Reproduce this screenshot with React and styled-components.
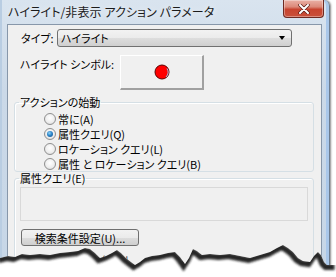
import React from 'react';
import styled, { createGlobalStyle } from 'styled-components';

const GlobalStyle = createGlobalStyle`
  html, body {
    margin: 0;
    padding: 0;
    background: #ffffff;
  }
  body {
    font-family: "Noto Sans CJK JP", "Noto Sans", sans-serif;
    font-feature-settings: "palt";
  }
`;

const Page = styled.div`
  position: relative;
  width: 336px;
  height: 277px;
  overflow: hidden;
  background: #ffffff;
`;

const Window = styled.div`
  width: 330px;
  height: 300px;
  box-sizing: border-box;
  padding: 0 7px 0 7px;
  background: linear-gradient(180deg, #d9e4ef 0%, #cbd9e8 30%, #c6d6e7 100%);
  border-right: 1px solid #6d7c8e;
  border-top-right-radius: 6px;
  box-shadow: 1px 0 2px rgba(0, 0, 0, 0.45), inset -3px 0 0 #a9c7ea, inset 2px 0 0 #b9cde2;
  display: flex;
  flex-direction: column;
`;

const TitleBar = styled.div`
  height: 24px;
  margin: 0 -2px 0 -7px;
  padding-left: 8px;
  display: flex;
  align-items: flex-start;
`;

const Title = styled.div`
  padding-top: 4px;
  font-size: 12px;
  line-height: 15px;
  color: #1b1b1b;
  text-shadow: 0 0 6px rgba(255, 255, 255, 0.9);
  letter-spacing: 0.1px;
`;

const CloseButton = styled.div`
  margin-left: auto;
  width: 41px;
  height: 18px;
  box-sizing: border-box;
  border: 1px solid #6e2a22;
  border-top: none;
  border-radius: 0 0 4px 4px;
  background: linear-gradient(180deg, #eab1a5 0%, #dc8a7a 40%, #c8442f 55%, #c9503a 100%);
  box-shadow: inset 0 0 0 1px rgba(255, 255, 255, 0.35);
  display: flex;
  align-items: center;
  justify-content: center;
`;

const Client = styled.div`
  flex: 1;
  background: #f0f0f0;
  border: 1px solid #8797aa;
  border-bottom: none;
  padding-top: 4px;
  font-size: 11px;
  color: #000;
`;

const TypeRow = styled.div`
  display: flex;
  align-items: center;
  height: 18px;
  padding-left: 13px;
`;

const TypeLabel = styled.span`
  width: 36px;
  line-height: 14px;
`;

const Combo = styled.div`
  width: 235px;
  height: 18px;
  box-sizing: border-box;
  border: 1px solid #707070;
  border-radius: 3px;
  background: linear-gradient(180deg, #f2f2f2 0%, #ebebeb 50%, #dddddd 51%, #cfcfcf 100%);
  display: flex;
  align-items: center;
  padding: 0 6px 0 3px;
  line-height: 14px;
`;

const ComboText = styled.span`
  flex: 1;
`;

const Arrow = styled.span`
  width: 0;
  height: 0;
  border-left: 3.5px solid transparent;
  border-right: 3.5px solid transparent;
  border-top: 4px solid #000;
`;

const SymbolRow = styled.div`
  display: flex;
  align-items: flex-start;
  margin-top: 8px;
  padding-left: 12px;
`;

const SymbolLabel = styled.span`
  width: 100px;
  padding-top: 2px;
  line-height: 14px;
`;

const SymbolButton = styled.div`
  width: 84px;
  height: 35px;
  box-sizing: border-box;
  background: #f0f0f0;
  border-top: 1px solid #ffffff;
  border-left: 1px solid #ffffff;
  border-right: 2px solid #a0a0a0;
  border-bottom: 2px solid #a0a0a0;
  display: flex;
  align-items: center;
  justify-content: center;
`;

const Group = styled.fieldset`
  margin: ${p => p.$top}px 7px 0 6px;
  padding: 0 0 ${p => p.$bottom}px 0;
  border: 1px solid #d5dfe5;
  border-radius: 3px;
  box-shadow: inset 1px 1px 0 #ffffff;
  min-width: 0;
`;

const Legend = styled.legend`
  margin-left: 4px;
  padding: 0 1px;
  line-height: 14px;
  font-size: 11px;
`;

const RadioList = styled.div`
  padding-top: 2px;
  display: flex;
  flex-direction: column;
`;

const RadioRow = styled.label`
  display: flex;
  align-items: center;
  height: 15px;
  padding-left: 29px;
  line-height: 14px;
`;

const RadioDot = styled.span`
  width: 12px;
  height: 12px;
  box-sizing: border-box;
  border-radius: 50%;
  border: 1px solid #8f8f8f;
  background: radial-gradient(circle at 50% 40%, #ffffff 0%, #eeeeee 55%, #d4d4d4 100%);
  margin-right: 2px;
  display: flex;
  align-items: center;
  justify-content: center;

  &::after {
    content: '';
    display: ${p => (p.$checked ? 'block' : 'none')};
    width: 6px;
    height: 6px;
    border-radius: 50%;
    background: radial-gradient(circle at 40% 35%, #8fd2f7 0%, #2d86c9 45%, #0f4a86 100%);
  }
`;

const QueryBox = styled.div`
  margin: 2px 0 0 5px;
  width: 288px;
  height: 34px;
  box-sizing: border-box;
  border: 1px solid #d9d9d9;
  background: #f0f0f0;
`;

const Button = styled.div`
  margin: 8px 0 0 6px;
  width: 118px;
  height: 17px;
  box-sizing: border-box;
  border: 1px solid #707070;
  border-radius: 3px;
  background: linear-gradient(180deg, #f2f2f2 0%, #ebebeb 50%, #dddddd 51%, #cfcfcf 100%);
  display: flex;
  align-items: center;
  justify-content: center;
  line-height: 14px;
`;

const SubLabel = styled.div`
  margin: 7px 0 0 22px;
  line-height: 14px;
  color: #444;
`;

const Torn = styled.svg`
  position: absolute;
  left: 0;
  top: 240px;
  display: block;
`;

const edge = [
  [0, 18], [8, 16], [15, 17], [22, 14], [30, 15], [40, 14], [50, 15], [60, 13], [70, 12],
  [78, 11], [85, 8], [90, 9], [95, 13], [100, 18], [106, 16], [112, 13], [117, 10], [121, 13],
  [126, 18], [131, 22], [135, 25], [140, 22], [145, 18], [152, 16], [160, 15], [168, 13],
  [175, 12], [180, 17], [185, 24], [189, 18], [193, 9], [197, 11], [202, 15], [210, 14],
  [220, 15], [230, 14], [240, 16], [250, 18], [260, 15], [270, 12], [277, 8], [283, 5],
  [288, 8], [293, 12], [298, 18], [303, 21], [310, 22], [314, 16], [318, 12], [321, 15],
  [324, 22], [327, 25], [336, 25],
];

const edgeLine = edge.map(([x, y]) => `${x},${y}`).join(' ');
const edgeShape = `${edgeLine} 336,40 0,40`;

const TornEdge = () => (
  <Torn width="336" height="37" viewBox="0 0 336 37">
    <defs>
      <clipPath id="tear">
        <polygon points={edgeShape} />
      </clipPath>
      <filter id="soft" x="-5%" y="-50%" width="110%" height="200%">
        <feGaussianBlur stdDeviation="1.2" />
      </filter>
    </defs>
    <g clipPath="url(#tear)">
      <rect x="0" y="0" width="336" height="40" fill="#ffffff" />
      <polyline points={edgeLine} fill="none" stroke="#262626" strokeWidth="6" filter="url(#soft)" transform="translate(-1.5 2)" />
    </g>
  </Torn>
);

const options = [
  { label: '常に(A)', checked: false },
  { label: '属性クエリ(Q)', checked: true },
  { label: 'ロケーション クエリ(L)', checked: false },
  { label: '属性 と ロケーション クエリ(B)', checked: false },
];

export default function App() {
  return (
    <Page>
      <GlobalStyle />
      <Window>
        <TitleBar>
          <Title>ハイライト/非表示 アクション パラメータ</Title>
          <CloseButton>
            <svg width="12" height="10" viewBox="0 0 12 10">
              <path d="M2 1 L10 9 M10 1 L2 9" stroke="#5a1d16" strokeWidth="3.4" strokeLinecap="round" />
              <path d="M2 1 L10 9 M10 1 L2 9" stroke="#ffffff" strokeWidth="2" strokeLinecap="round" />
            </svg>
          </CloseButton>
        </TitleBar>
        <Client>
          <TypeRow>
            <TypeLabel>タイプ:</TypeLabel>
            <Combo>
              <ComboText>ハイライト</ComboText>
              <Arrow />
            </Combo>
          </TypeRow>
          <SymbolRow>
            <SymbolLabel>ハイライト シンボル:</SymbolLabel>
            <SymbolButton>
              <svg width="16" height="16" viewBox="0 0 16 16">
                <circle cx="8" cy="8" r="7" fill="#ff0000" stroke="#5c0000" strokeWidth="1" />
                <path d="M13 4.5 A7 7 0 0 1 12 13" fill="none" stroke="#9cc3e6" strokeWidth="1" />
              </svg>
            </SymbolButton>
          </SymbolRow>
          <Group $top={5} $bottom={0}>
            <Legend>アクションの始動</Legend>
            <RadioList>
              {options.map(o => (
                <RadioRow key={o.label}>
                  <RadioDot $checked={o.checked} />
                  {o.label}
                </RadioRow>
              ))}
            </RadioList>
          </Group>
          <Group $top={-1} $bottom={20}>
            <Legend>属性クエリ(E)</Legend>
            <QueryBox />
            <Button>検索条件設定(U)...</Button>
            <SubLabel>ロケーション クエリ</SubLabel>
          </Group>
        </Client>
      </Window>
      <TornEdge />
    </Page>
  );
}
